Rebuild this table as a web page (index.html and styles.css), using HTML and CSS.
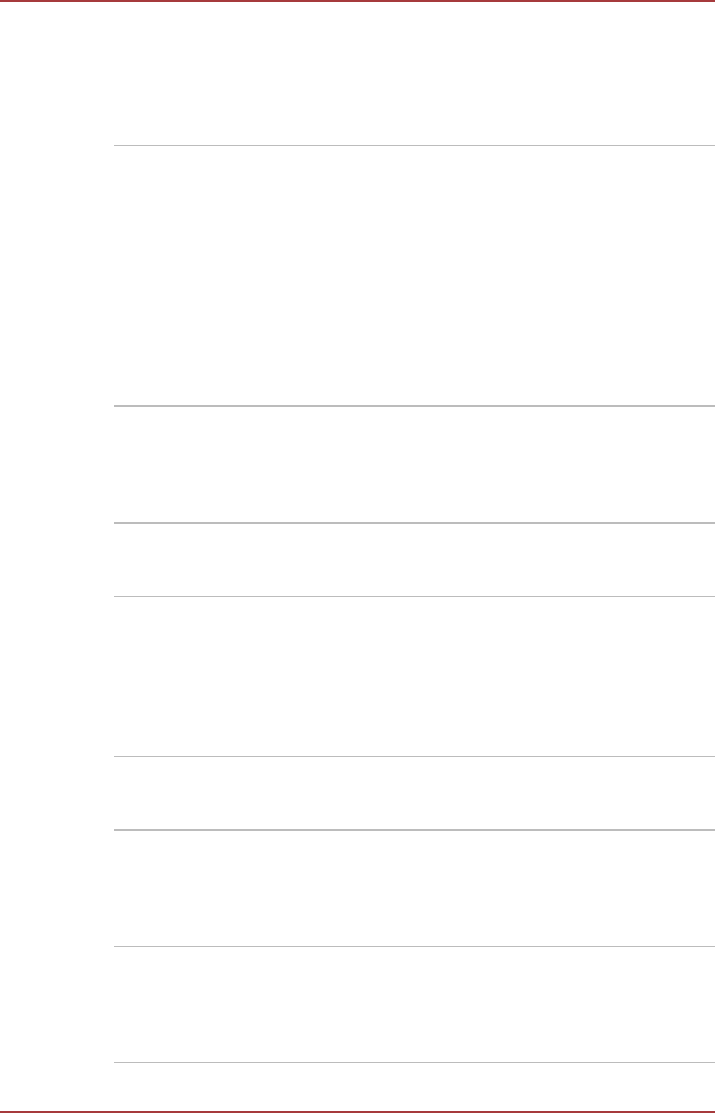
FILE: index.html
```html
<!DOCTYPE html>
<html lang="en">
<head>
<meta charset="utf-8">
<title>Page</title>
<link rel="stylesheet" href="styles.css">
</head>
<body>
<div class="page">
  <header class="page-head"></header>
  <main class="table">
    <div class="row row-thin h260"></div>
    <div class="row row-thick h117"></div>
    <div class="row row-thick h74"></div>
    <div class="row row-thin h160"></div>
    <div class="row row-thin h73"></div>
    <div class="row row-thick h117"></div>
    <div class="row row-thin h116"></div>
    <div class="row row-thin h49"></div>
  </main>
  <footer class="page-foot"></footer>
</div>
</body>
</html>
```
FILE: styles.css
```css
html, body {
  margin: 0;
  padding: 0;
  background: #ffffff;
  font-family: "Liberation Sans", Arial, sans-serif;
}
.page {
  width: 715px;
  height: 1113px;
  display: flex;
  flex-direction: column;
  box-sizing: border-box;
  border-top: 2px solid #a63a3c;
  border-bottom: 2px solid #a63a3c;
}
.page-head {
  height: 143px;
  flex: none;
}
.table {
  margin-left: 114px;
  display: flex;
  flex-direction: column;
  flex: none;
}
.row {
  box-sizing: border-box;
  flex: none;
}
.row-thin { border-top: 1px solid #bcbcbc; }
.row-thick { border-top: 2px solid #bcbcbc; }
.h260 { height: 260px; }
.h117 { height: 117px; }
.h74 { height: 74px; }
.h160 { height: 160px; }
.h73 { height: 73px; }
.h116 { height: 116px; }
.h49 { height: 49px; }
.page-foot { flex: 1; }
```
